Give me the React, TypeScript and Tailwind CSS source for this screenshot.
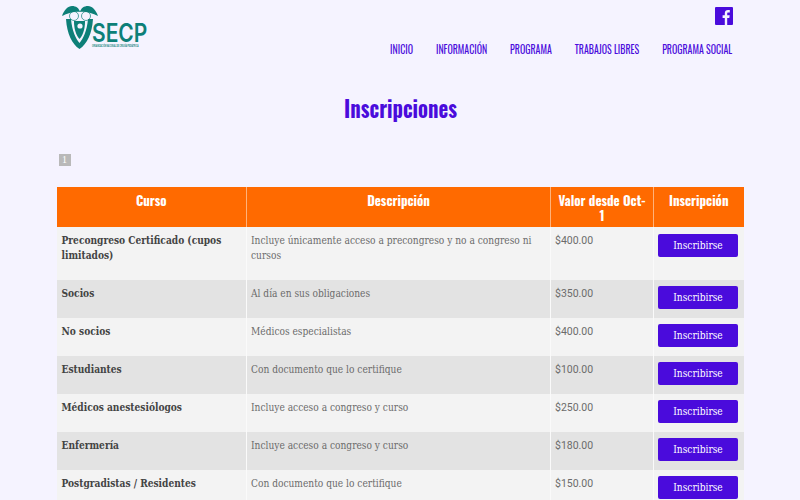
const condensed = "font-['Oswald','Liberation_Sans_Narrow','Roboto_Condensed','DejaVu_Sans_Condensed',sans-serif]";
const slab = "font-['DejaVu_Serif_Condensed','Liberation_Serif',serif]";

const navItems = ["INICIO", "INFORMACIÓN", "PROGRAMA", "TRABAJOS LIBRES", "PROGRAMA SOCIAL"];

const rows = [
  { course: "Precongreso Certificado (cupos limitados)", desc: "Incluye únicamente acceso a precongreso y no a congreso ni cursos", price: "$400.00", tall: true },
  { course: "Socios", desc: "Al día en sus obligaciones", price: "$350.00" },
  { course: "No socios", desc: "Médicos especialistas", price: "$400.00" },
  { course: "Estudiantes", desc: "Con documento que lo certifique", price: "$100.00" },
  { course: "Médicos anestesiólogos", desc: "Incluye acceso a congreso y curso", price: "$250.00" },
  { course: "Enfermería", desc: "Incluye acceso a congreso y curso", price: "$180.00" },
  { course: "Postgradistas / Residentes", desc: "Con documento que lo certifique", price: "$150.00" },
];

function Logo() {
  return (
    <svg width="90" height="48" viewBox="0 0 90 48" className="block">
      {/* faces */}
      <circle cx="14" cy="12" r="4.5" fill="#f5f3ff" stroke="#0d7f78" strokeWidth="0.7" />
      <circle cx="26" cy="12" r="4.5" fill="#f5f3ff" stroke="#0d7f78" strokeWidth="0.7" />
      {/* hair */}
      <path d="M2 12 C4 6 8 2 12 2 C16 2 19 4 20 8 C15 7 8 9 2 12Z" fill="#0d7f78" />
      <path d="M38 12 C36 6 32 2 28 2 C24 2 21 4 20 8 C25 7 32 9 38 12Z" fill="#0d7f78" />
      {/* shield */}
      <path d="M6 15 L11 15 C12 27 16 35 19.5 39 C23 35 27 27 28 15 L33 15 C32 30 27 40 19.5 45 C12 40 7 30 6 15Z" fill="#0d7f78" />
      <path d="M14 17 L25 17 C25 25 23 31 19.5 35 C16 31 14 25 14 17Z" fill="#0d7f78" />
      <circle cx="20" cy="22" r="2.6" fill="#f5f3ff" />
      <text transform="translate(32 38) scale(1 1.2)" fontFamily="Inter, sans-serif" fontSize="21" fontWeight="600" fill="#0d7f78">SECP</text>
      <text transform="translate(32 42.5) scale(0.6 1)" fontFamily="'Liberation Sans', sans-serif" fontSize="3" fontWeight="700" fill="#0d7f78">ORGANIZACIÓN NACIONAL DE CIRUGÍA PEDIÁTRICA</text>
    </svg>
  );
}

function FacebookIcon() {
  return (
    <svg width="18" height="18" viewBox="0 0 18 18" className="mt-[7px] block">
      <rect width="18" height="18" rx="1" fill="#4a0bdc" />
      <path d="M9.8 18 V11 H7.6 V8.2 H9.8 V6.2 C9.8 4 11.1 2.9 13 2.9 C13.9 2.9 14.6 3 14.8 3 V5.5 H13.4 C12.4 5.5 12.2 6 12.2 6.7 V8.2 H14.7 L14.3 11 H12.2 V18 Z" fill="#f5f3ff" />
    </svg>
  );
}

export default function App() {
  return (
    <main className="h-[500px] w-[800px] overflow-hidden bg-[#f5f3ff] font-['Roboto',sans-serif]">
      <div className="mx-auto w-[687px]">
        {/* Header */}
        <header className="flex h-[62px] justify-between">
          <div className="pl-[3px] pt-[4px]">
            <Logo />
          </div>
          <div className="flex flex-col items-end pr-[11px]">
            <FacebookIcon />
            <nav className={`mt-[16px] flex origin-right scale-x-[0.82] gap-[28px] text-[12px] leading-[16px] text-[#4a0bdc] ${condensed}`}>
              {navItems.map((item) => (
                <a key={item} href="#" className="whitespace-nowrap">{item}</a>
              ))}
            </nav>
          </div>
        </header>

        <h1 className={`mt-[30px] scale-x-[0.86] text-center text-[24px] font-bold leading-[30px] text-[#4a0bdc] ${condensed}`}>
          Inscripciones
        </h1>

        {/* Pagination */}
        <div className="mt-[32px] pl-[2px]">
          <span className="block h-[12px] w-[12px] bg-[#b9b9b9] text-center font-['Liberation_Serif',serif] text-[10px] leading-[12px] text-white">1</span>
        </div>

        <table className="mt-[21px] w-[687px] table-fixed border-collapse">
          <colgroup>
            <col className="w-[190px]" />
            <col className="w-[304px]" />
            <col className="w-[103px]" />
            <col className="w-[90px]" />
          </colgroup>
          <thead>
            <tr className={`h-[40px] bg-[#ff6a00] text-white ${condensed}`}>
              {["Curso", "Descripción", "Valor desde Oct-1", "Inscripción"].map((h) => (
                <th key={h} className="border-x border-[#ffb27a] px-[7px] pt-[6px] pb-[3px] align-top text-[13px] font-bold leading-[15px] first:border-l-0 last:border-r-0">
                  {h}
                </th>
              ))}
            </tr>
          </thead>
          <tbody className="text-[10.1px] leading-[15px] text-[#6b6b6b]">
            {rows.map((row, i) => (
              <tr key={row.course} className={`${row.tall ? "h-[53px]" : "h-[38px]"} ${i % 2 === 0 ? "bg-[#f3f3f3]" : "bg-[#e3e3e3]"}`}>
                <td className={`border-r border-[#fafafa] px-[5px] pt-[6px] align-top font-bold text-[#444] ${slab}`}>
                  {row.course}
                </td>
                <td className={`border-x border-[#fafafa] px-[4px] pt-[6px] align-top ${slab}`}>
                  {row.desc}
                </td>
                <td className="border-x border-[#fafafa] px-[4px] pt-[6px] align-top text-[10.5px]">{row.price}</td>
                <td className={`border-l border-[#fafafa] pl-[4px] align-top ${row.tall ? "pt-[7px]" : "pt-[6px]"}`}>
                  <button className={`block h-[23px] w-[80px] rounded-[2px] bg-[#4a0bdc] text-[10.1px] text-white ${slab}`}>
                    Inscribirse
                  </button>
                </td>
              </tr>
            ))}
          </tbody>
        </table>
      </div>
    </main>
  );
}
